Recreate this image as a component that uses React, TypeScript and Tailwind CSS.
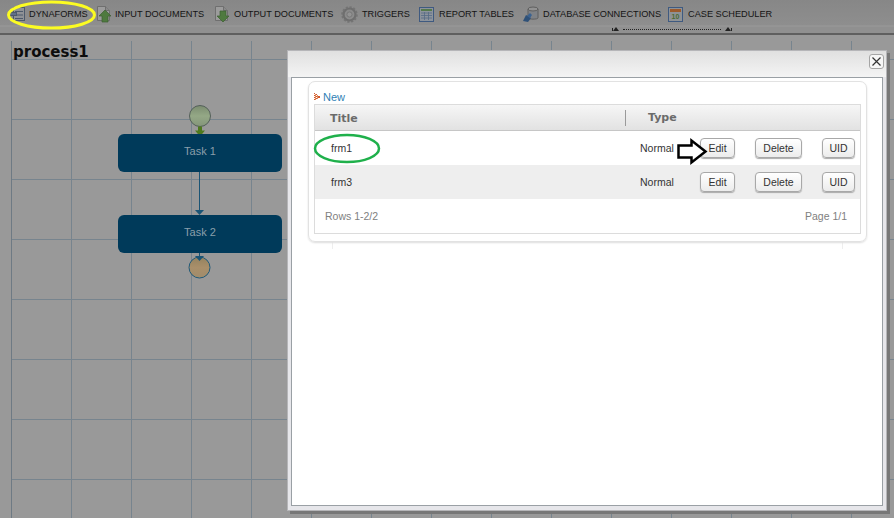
const tahoma = "font-['Liberation_Sans',sans-serif]";

function PageIcon({ up }: { up: boolean }) {
  return (
    <svg width="16" height="18" viewBox="0 0 16 18" className="shrink-0">
      <path d="M1.5 1.5h8l4 4v10h-12z" fill="#9c9c9c" stroke="#6f6f6f" />
      <path d="M9.5 1.5v4h4" fill="#8a8a8a" stroke="#6f6f6f" />
      {up ? (
        <path d="M9 5l6 6h-3v6H6v-6H3z" fill="#4f7a3f" stroke="#3c5f30" strokeWidth="0.7" />
      ) : (
        <path d="M9 17l6-6h-3V6H6v5H3z" fill="#4f7a3f" stroke="#3c5f30" strokeWidth="0.7" />
      )}
    </svg>
  );
}

function FormIcon() {
  return (
    <svg width="17" height="16" viewBox="0 0 17 16" className="shrink-0">
      <rect x="5.5" y="1.5" width="11" height="13" fill="#8f9296" stroke="#4d5a6c" />
      <path d="M7 5.5h8M7 9h8M7 12.5h8" stroke="#4d5a6c" />
      <rect x="1.5" y="6.5" width="7" height="3" fill="#61708a" stroke="#4d5a6c" />
    </svg>
  );
}

function GearIcon() {
  return (
    <svg width="17" height="17" viewBox="0 0 17 17" className="shrink-0">
      <circle cx="8.5" cy="8.5" r="6" fill="none" stroke="#6e6e6e" strokeWidth="2.2" />
      <circle cx="8.5" cy="8.5" r="7.3" fill="none" stroke="#747474" strokeWidth="2" strokeDasharray="2.2 1.6" />
      <circle cx="8.5" cy="8.5" r="2.6" fill="#939393" stroke="#787878" />
    </svg>
  );
}

function TableIcon() {
  return (
    <svg width="15" height="15" viewBox="0 0 15 15" className="shrink-0">
      <rect x="0.5" y="0.5" width="14" height="14" fill="#8c939c" stroke="#3f5a80" />
      <rect x="2" y="2" width="11" height="2" fill="#55794c" />
      <path d="M2 6h11M2 8.500h11M2 11h11M5.500 5v8M9.500 5v8" stroke="#556b85" strokeWidth="0.8" />
    </svg>
  );
}

function DbIcon() {
  return (
    <svg width="17" height="17" viewBox="0 0 17 17" className="shrink-0">
      <path d="M6 3v9c0 1.500 10 1.500 10 0V3z" fill="#7f8286" stroke="#5f5f5f" />
      <ellipse cx="11" cy="3" rx="5" ry="2" fill="#929292" stroke="#5f5f5f" />
      <path d="M1 15l3-6 5 3-3 4z" fill="#2f5178" />
      <path d="M5 10l3-3 2 2-2 3z" fill="#3b6290" />
    </svg>
  );
}

function CalendarIcon() {
  return (
    <svg width="15" height="15" viewBox="0 0 15 15" className="shrink-0">
      <rect x="0.500" y="0.500" width="14" height="14" fill="#8e9296" stroke="#3f5a80" />
      <rect x="2" y="2" width="11" height="3" fill="#9c5a2c" />
      <text x="7.500" y="12" fontSize="7" fontWeight="bold" textAnchor="middle" fill="#4b6a32" fontFamily="Liberation Sans, sans-serif">10</text>
    </svg>
  );
}

const toolbar = [
  { label: "DYNAFORMS", icon: <FormIcon />, w: "w-[88px]", iw: "w-[21px]" },
  { label: "INPUT DOCUMENTS", icon: <PageIcon up />, w: "w-[118px]", iw: "w-[19px]" },
  { label: "OUTPUT DOCUMENTS", icon: <PageIcon up={false} />, w: "w-[127px]", iw: "w-[20px]" },
  { label: "TRIGGERS", icon: <GearIcon />, w: "w-[78px]", iw: "w-[21px]" },
  { label: "REPORT TABLES", icon: <TableIcon />, w: "w-[103px]", iw: "w-[20px]" },
  { label: "DATABASE CONNECTIONS", icon: <DbIcon />, w: "w-[146px]", iw: "w-[21px]" },
  { label: "CASE SCHEDULER", icon: <CalendarIcon />, w: "w-[110px]", iw: "w-[20px]" },
];

const rows = [
  { title: "frm1", bg: "bg-white" },
  { title: "frm3", bg: "bg-[#eeeeee]" },
];

function Btn({ label, w }: { label: string; w: string }) {
  return (
    <button className={`${w} h-[20px] pt-[1px] rounded-[4px] border border-[#a8a8a8] bg-gradient-to-b from-white to-[#ececec] text-[10.5px] leading-none text-[#333] shadow-[0_1px_1px_#aaaaaa]`}>
      {label}
    </button>
  );
}

export default function App() {
  return (
    <div className={`relative w-[894px] h-[518px] overflow-hidden bg-[#999999] ${tahoma}`}>
      {/* Toolbar */}
      <div className="h-[35px] border-b-2 border-[#5f5f5f] bg-[linear-gradient(#878787_0,#8e8e8e_25px,#9a9a9a_26px,#909090_27px)] pl-[8px] pt-[5px] flex items-start">
        {toolbar.map((t) => (
          <div key={t.label} className={`${t.w} shrink-0 flex items-center h-[18px]`}>
            <div className={`${t.iw} shrink-0`}>{t.icon}</div>
            <span className="pt-[1px] text-[9.2px] leading-none text-[#141414] whitespace-nowrap">{t.label}</span>
          </div>
        ))}
      </div>

      {/* Ruler marks */}
      <div className="absolute left-[612px] top-[26px] w-[120px] h-[6px] flex items-center justify-between">
        <div className="w-px h-[3px] bg-[#222]" />
        <div className="w-0 h-0 border-x-[3px] border-x-transparent border-b-[4px] border-b-[#222]" />
        <div className="flex-1 mx-[4px] border-t border-dotted border-[#222]" />
        <div className="w-0 h-0 border-x-[3px] border-x-transparent border-b-[4px] border-b-[#222]" />
        <div className="w-px h-[3px] bg-[#222]" />
      </div>

      {/* Canvas */}
      <div className="absolute left-[11px] top-[41px] right-0 bottom-0 border-l border-[#6e7a84] bg-[linear-gradient(#77848e_1px,transparent_1px),linear-gradient(90deg,#77848e_1px,transparent_1px)] bg-[size:60px_60px] bg-[position:-1px_18px]">
        <div className="pl-[1px] pt-[1px] text-[15px] leading-[20px] font-bold text-[#0d0d0d] font-['DejaVu_Sans',sans-serif]">process1</div>
      </div>

      {/* Diagram */}
      <svg className="absolute left-[185px] top-[103px]" width="30" height="36" viewBox="0 0 30 36">
        <defs>
          <linearGradient id="startFill" x1="0" y1="0" x2="0" y2="1">
            <stop offset="0" stopColor="#7b8c70" />
            <stop offset="0.5" stopColor="#94a886" />
            <stop offset="1" stopColor="#84957a" />
          </linearGradient>
        </defs>
        <circle cx="15" cy="13" r="10.500" fill="url(#startFill)" stroke="#54605a" />
        <path d="M13 23.500h4v4h3l-5 6-5-6h3z" fill="#4e7a1e" />
      </svg>
      <div className="absolute left-[118px] top-[134px] w-[164px] h-[38px] rounded-[6px] bg-[#003a5a] flex items-center justify-center pb-[3px] text-[11px] text-[#8a9fab]">Task 1</div>
      <svg className="absolute left-[190px] top-[172px]" width="20" height="43" viewBox="0 0 20 43">
        <path d="M9.500 0v38" stroke="#1a5475" />
        <path d="M5 38h9l-4.500 5z" fill="#1a5475" />
      </svg>
      <div className="absolute left-[118px] top-[215px] w-[164px] h-[38px] rounded-[6px] bg-[#003a5a] flex items-center justify-center pb-[3px] text-[11px] text-[#8a9fab]">Task 2</div>
      <svg className="absolute left-[185px] top-[253px]" width="30" height="26" viewBox="0 0 30 26">
        <defs>
          <linearGradient id="endFill" x1="0" y1="0" x2="0" y2="1">
            <stop offset="0" stopColor="#94825f" />
            <stop offset="0.5" stopColor="#a98f6a" />
            <stop offset="1" stopColor="#a08c6c" />
          </linearGradient>
        </defs>
        <circle cx="14.500" cy="14.500" r="10.500" fill="url(#endFill)" stroke="#1f5a7a" />
        <path d="M10 3h9l-4.500 5z" fill="#1a5475" />
        <path d="M14 0h1v4h-1z" fill="#1a5475" />
      </svg>

      {/* Modal */}
      <div className="absolute left-[287px] top-[50px] w-[600px] h-[461px] flex flex-col border border-[#b5b5b8] bg-[#e6e6ea] shadow-[3px_3px_0_#777777]">
        <div className="h-[26px] shrink-0 flex justify-end items-start pt-[3px] pr-[2px] bg-gradient-to-b from-[#e0e0e0] to-[#f4f4f4]">
          <button className="w-[15px] h-[15px] rounded-[3px] border border-[#a5a5a5] bg-[#f6f6f6] flex items-center justify-center">
            <svg width="9" height="9" viewBox="0 0 9 9">
              <path d="M0.500 0.500l8 8M8.500 0.500l-8 8" stroke="#333" strokeWidth="1.200" />
            </svg>
          </button>
        </div>
        <div className="flex-1 mx-[3px] mb-[4px] border border-[#9aa0a5] bg-white pl-[16px] pt-[3px]">
          <div className="relative w-[559px] h-[161px] rounded-[7px] border border-[#e2e2e2] shadow-[0_1px_2px_#dddddd] px-[5px] pt-[8px]">
            <div className="flex items-center h-[14px] text-[11px] text-[#2f7fb5]">
              <svg width="6" height="8" viewBox="0 0 6 8" className="mr-[3px]">
                <path d="M0 0h1v1H0zM2 1h1v1H2zM0 2h1v1H0zM2 3h1v1H2zM4 3h2v2H4zM0 4h1v1H0zM2 5h1v1H2zM0 6h1v1H0z" fill="#d2562c" />
                <path d="M1 1h1v6H1zM3 2h1v4H3z" fill="#e08a5c" />
              </svg>
              New
            </div>
            <div className="border border-[#dcdcdc]">
              <div className="h-[26px] flex items-center border-b border-[#c6c6c6] bg-gradient-to-b from-[#f6f6f6] to-[#e2e2e2] text-[11px] font-bold text-[#6b6b6b] font-['DejaVu_Sans',sans-serif]">
                <div className="w-[311px] pl-[15px] border-r border-[#9a9a9a] h-[16px] leading-[18px]">Title</div>
                <div className="pl-[22px] pt-[2px]">Type</div>
              </div>
              {rows.map((r) => (
                <div key={r.title} className={`h-[34px] flex items-center text-[10.5px] text-[#333] ${r.bg}`}>
                  <div className="w-[325px] pl-[16px] pt-[1px]">{r.title}</div>
                  <div className="w-[60px] pt-[1px]">Normal</div>
                  <Btn label="Edit" w="w-[35px]" />
                  <div className="w-[20px]" />
                  <Btn label="Delete" w="w-[47px]" />
                  <div className="w-[20px]" />
                  <Btn label="UID" w="w-[33px]" />
                </div>
              ))}
              <div className="h-[34px] pt-[1px] flex items-center justify-between pl-[10px] pr-[13px] text-[10.500px] text-[#808080]">
                <span>Rows 1-2/2</span>
                <span>Page 1/1</span>
              </div>
            </div>
          </div>
          <div className="ml-[24px] w-[511px] h-[7px] border-x border-[#eeeeee]" />
        </div>
      </div>

      {/* Annotations */}
      <svg className="absolute left-0 top-0 pointer-events-none" width="894" height="518" viewBox="0 0 894 518">
        <ellipse cx="51.500" cy="15" rx="43" ry="13" fill="none" stroke="#fcfc22" strokeWidth="3" />
        <ellipse cx="347" cy="148.500" rx="32" ry="13.500" fill="none" stroke="#1fb04b" strokeWidth="2.500" />
        <path d="M678.500 145.500h13v-5l14 11-14 11v-5h-13z" fill="#ffffff" stroke="#000000" strokeWidth="2.500" />
      </svg>
    </div>
  );
}
